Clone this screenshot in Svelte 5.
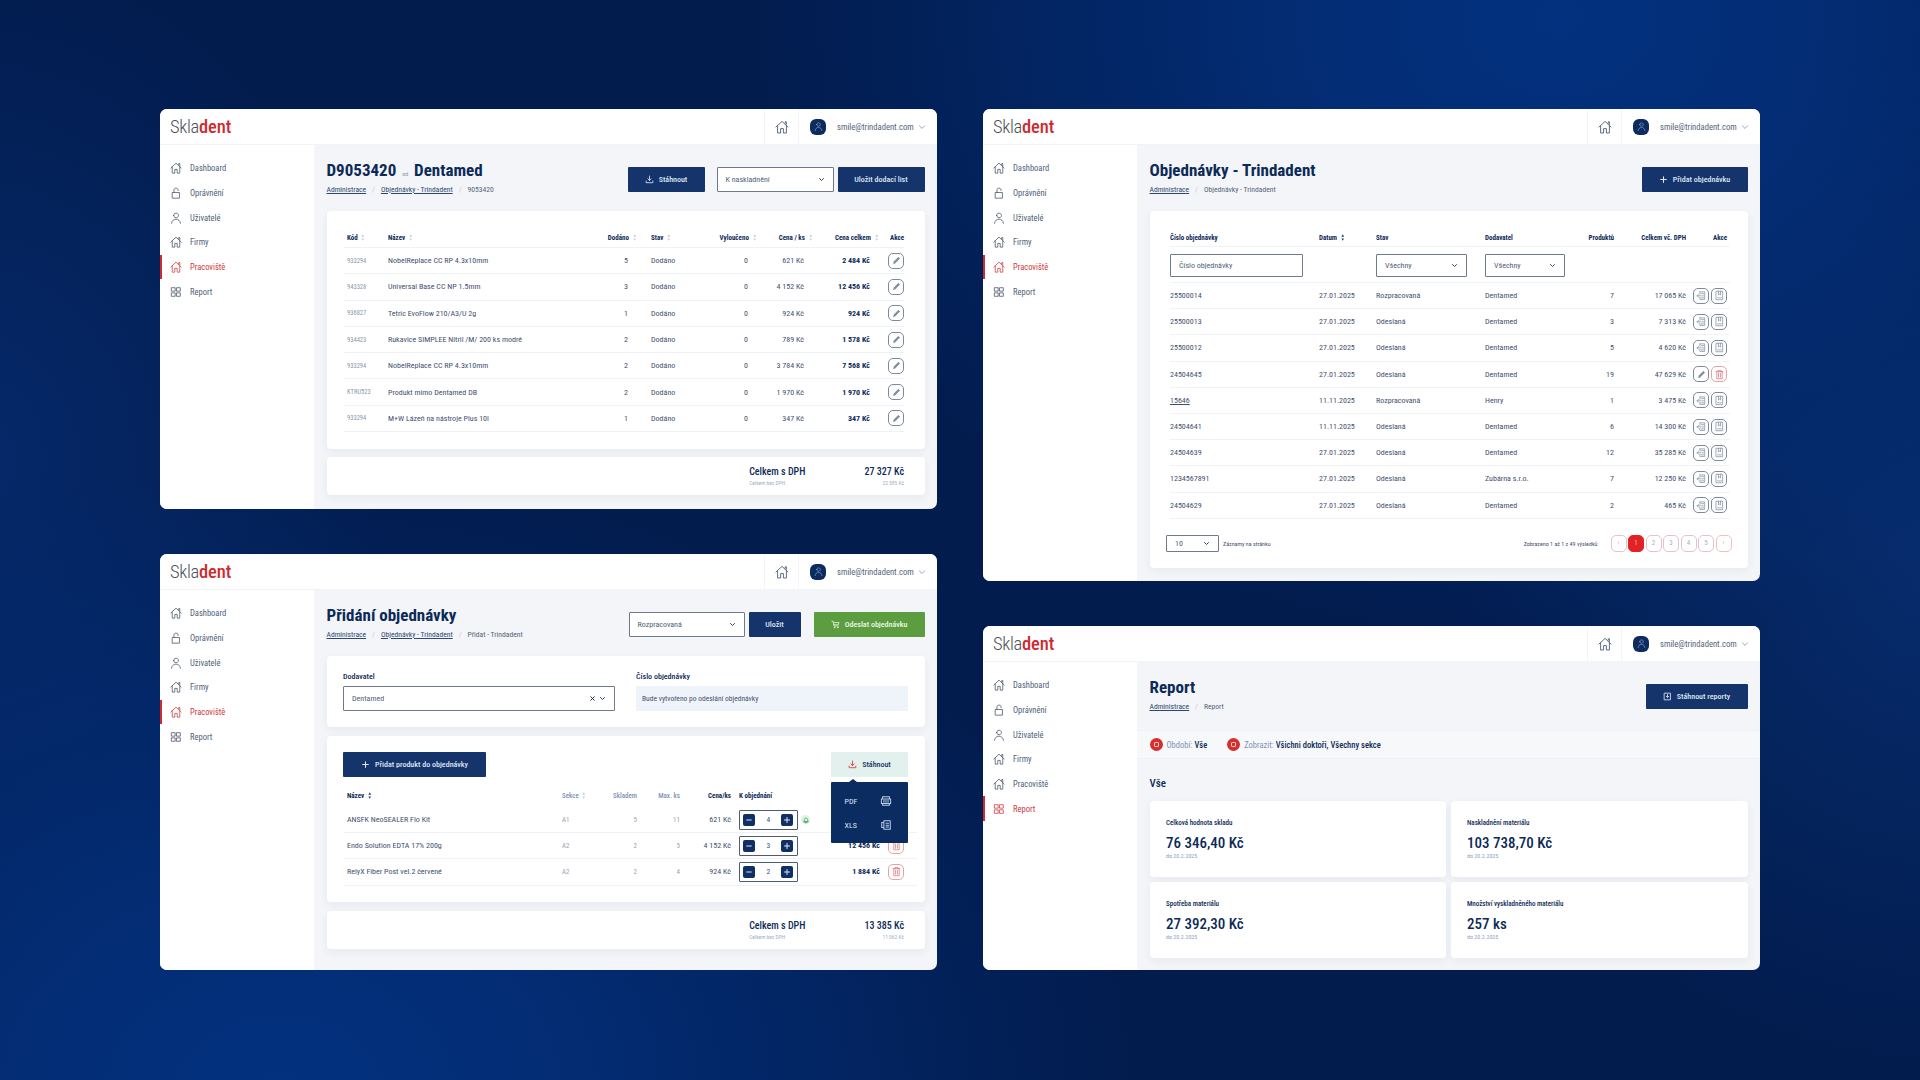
<script>
  const nav = [['home','Dashboard'],['lock','Oprávnění'],['user','Uživatelé'],['home','Firmy'],['home','Pracoviště'],['grid','Report']];
  const deliveries = [
    ['933294','NobelReplace CC RP 4.3x10mm','5','621 Kč','2 484 Kč'],
    ['943328','Universal Base CC NP 1.5mm','3','4 152 Kč','12 456 Kč'],
    ['936827','Tetric EvoFlow 210/A3/U 2g','1','924 Kč','924 Kč'],
    ['934423','Rukavice SIMPLEE Nitril /M/ 200 ks modré','2','789 Kč','1 578 Kč'],
    ['933294','NobelReplace CC RP 4.3x10mm','2','3 784 Kč','7 568 Kč'],
    ['KTRU523','Produkt mimo Dentamed DB','2','1 970 Kč','1 970 Kč'],
    ['933294','M+W Lázeň na nástroje Plus 10l','1','347 Kč','347 Kč']
  ];
  const orders = [
    ['25500014','27.01.2025','Rozpracovaná','Dentamed','7','17 065 Kč'],
    ['25500013','27.01.2025','Odeslaná','Dentamed','3','7 313 Kč'],
    ['25500012','27.01.2025','Odeslaná','Dentamed','5','4 620 Kč'],
    ['24504645','27.01.2025','Odeslaná','Dentamed','19','47 629 Kč'],
    ['15646','11.11.2025','Rozpracovaná','Henry','1','3 475 Kč'],
    ['24504641','11.11.2025','Odeslaná','Dentamed','6','14 300 Kč'],
    ['24504639','27.01.2025','Odeslaná','Dentamed','12','35 285 Kč'],
    ['1234567891','27.01.2025','Odeslaná','Zubárna s.r.o.','7','12 250 Kč'],
    ['24504629','27.01.2025','Odeslaná','Dentamed','2','465 Kč']
  ];
  const lines = [
    ['ANSFK NeoSEALER Flo Kit','A1','5','11','621 Kč','4','2 484 Kč'],
    ['Endo Solution EDTA 17% 200g','A2','2','5','4 152 Kč','3','12 456 Kč'],
    ['RelyX Fiber Post vel.2 červené','A2','2','4','924 Kč','2','1 884 Kč']
  ];
  const stats = [
    ['Celková hodnota skladu','76 346,40 Kč'],
    ['Naskladnění materiálu','103 738,70 Kč'],
    ['Spotřeba materiálu','27 392,30 Kč'],
    ['Množství vyskladněného materiálu','257 ks']
  ];
</script>

{#snippet icon(name)}
  <svg class="ic" viewBox="0 0 14 14" fill="none" stroke="currentColor" stroke-width="0.9" stroke-linejoin="round" stroke-linecap="round">
    {#if name === 'home'}
      <path d="M1 7 7 1.4 13 7M2.6 5.8V13H5.6V8.6H8.4V13H11.4V5.8M10.2 3.2V1.8H11.4V4.4"/>
    {:else if name === 'lock'}
      <path d="M3 6.4H11V13H3ZM4.6 6.4V3.4C4.6 .6 9.4 .6 9.4 3.4V4.2"/>
    {:else if name === 'user'}
      <path d="M4.2 4C4.2 .4 9.8 .4 9.8 4S4.2 7.6 4.2 4ZM1.8 13.2C2.2 6.6 11.8 6.6 12.2 13.2"/>
    {:else if name === 'grid'}
      <path d="M2 2H6V6H2ZM8 2H12V6H8ZM2 8H6V12H2ZM8 8H12V12H8Z"/>
    {:else if name === 'pencil'}
      <path d="M3.4 10.6 4 8.4 9.4 3 11 4.6 5.6 10Z" fill="currentColor"/>
    {:else if name === 'export'}
      <path d="M5 2.4H11V12H5V9.4M5 5.4V2.4M1.4 7.4H6.6M3.2 5.6 1.4 7.4 3.2 9.2M7 4.6H9.6M8 7.4H9.6M7 10H9.6"/>
    {:else if name === 'doc'}
      <path d="M3 1.6H11V12.4H3ZM5.6 1.6V6.4L7 5.2 8.4 6.4V1.6M4.6 10H9.4"/>
    {:else if name === 'trash'}
      <path d="M2.6 3.4H11.4M5 3.4V2H9V3.4M3.6 3.4V12.4H10.4V3.4M5.8 5.4V10.4M8.2 5.4V10.4"/>
    {:else if name === 'download'}
      <path d="M7 1.6V8.4M4.4 6 7 8.6 9.6 6M1.8 9.4V12H12.2V9.4" stroke-width="1.3"/>
    {:else if name === 'cart'}
      <path d="M1.4 2H3.4L4.8 9.4H11.4M3.8 4H12.4L11.4 7.4H4.4" stroke-width="1.2"/><circle cx="5.4" cy="11.6" r=".8"/><circle cx="10.6" cy="11.6" r=".8"/>
    {:else if name === 'plus'}
      <path d="M7 2.6V11.4M2.6 7H11.4" stroke-width="1.7"/>
    {:else if name === 'minus'}
      <path d="M3 7H11" stroke-width="1.7"/>
    {:else if name === 'chev'}
      <path d="M3 5 7 9 11 5" stroke-width="1.8"/>
    {:else if name === 'chevthin'}
      <path d="M2.5 5 7 9.5 11.5 5" stroke-width="1"/>
    {:else if name === 'x'}
      <path d="M3.5 3.5 10.5 10.5M10.5 3.5 3.5 10.5" stroke-width="2"/>
    {:else if name === 'save'}
      <path d="M2.4 1.8H11.6V12.2H2.4ZM7 3.8V8.4M5 6.6 7 8.6 9 6.6" stroke-width="1.3"/>
    {:else if name === 'sheet'}
      <path d="M2 4H4.5V2H12V12H4.5V10H2ZM4.5 4V10M7 5H10M7 7.2H10M7 9.4H10" stroke-width="1.2"/>
    {:else if name === 'pdf'}
      <path d="M3 4.6V2H11V4.6M3 10V12H11V10M1.6 4.6H12.4V10H1.6ZM4.6 6.2V8.4M7 6.2V8.4M9.4 6.2V8.4" stroke-width="1.2"/>
    {:else if name === 'bell'}
      <path d="M4 10V6.4C4 2.8 10 2.8 10 6.4V10ZM3 10H11M6 11.8H8" stroke-width="1.3"/>
    {/if}
  </svg>
{/snippet}

{#snippet sort(cls = '')}
  <svg class="sort {cls}" viewBox="0 0 4 8"><path d="M2 .4 3.6 3H.4Z"/><path d="M2 7.6 3.6 5H.4Z"/></svg>
{/snippet}

{#snippet crumbs(items)}
  <div class="crumbs">
    {#each items as c, i}
      {#if i > 0}<i>/</i>{/if}
      <span class:link={i < items.length - 1}>{c}</span>
    {/each}
  </div>
{/snippet}

{#snippet select(label, cls = '')}
  <div class="select {cls}"><span>{label}</span>{@render icon('chev')}</div>
{/snippet}

{#snippet totals(a, b)}
  <div class="card totals">
    <div><b>Celkem s DPH</b><small>Celkem bez DPH</small></div>
    <div class="tr"><b>{a}</b><small>{b}</small></div>
  </div>
{/snippet}

{#snippet win(cls, active, content)}
  <section class="win {cls}">
    <header class="top">
      <div class="logo"><span>Skla</span><b>dent</b></div>
      <div class="homecell">{@render icon('home')}</div>
      <div class="usercell">
        <span class="avatar">{@render icon('user')}</span>
        <span class="mail">smile@trindadent.com</span>
        {@render icon('chevthin')}
      </div>
    </header>
    <div class="under">
      <nav>
        {#each nav as [ic, label], i}
          <div class="navitem" class:on={i === active}>{@render icon(ic)}<span>{label}</span></div>
        {/each}
      </nav>
      <main>{@render content()}</main>
    </div>
  </section>
{/snippet}

{#snippet delivery()}
  <div class="head">
    <div>
      <h1>D9053420 <em>od</em> Dentamed</h1>
      {@render crumbs(['Administrace','Objednávky - Trindadent','9053420'])}
    </div>
    <div class="acts">
      <button class="btn w77">{@render icon('download')}Stáhnout</button>
      {@render select('K naskladnění','w117')}
      <button class="btn w87">Uložit dodací list</button>
    </div>
  </div>
  <div class="card t1">
    <div class="row hdr">
      <span>Kód {@render sort()}</span><span>Název {@render sort()}</span>
      <span class="r">Dodáno {@render sort()}</span><span class="st">Stav {@render sort()}</span>
      <span class="r">Vyloučeno {@render sort()}</span><span class="r">Cena / ks {@render sort()}</span>
      <span class="r">Cena celkem {@render sort()}</span><span class="r">Akce</span>
    </div>
    {#each deliveries as d}
      <div class="row">
        <span class="code">{d[0]}</span><span>{d[1]}</span>
        <span class="r v">{d[2]}</span><span class="st">Dodáno</span>
        <span class="r v">0</span><span class="r v">{d[3]}</span>
        <b class="r v">{d[4]}</b>
        <span class="r"><span class="ab">{@render icon('pencil')}</span></span>
      </div>
    {/each}
  </div>
  {@render totals('27 327 Kč','22 585 Kč')}
{/snippet}

{#snippet ordersView()}
  <div class="head">
    <div>
      <h1>Objednávky - Trindadent</h1>
      {@render crumbs(['Administrace','Objednávky - Trindadent'])}
    </div>
    <div class="acts"><button class="btn w106">{@render icon('plus')}Přidat objednávku</button></div>
  </div>
  <div class="card t2">
    <div class="row hdr">
      <span>Číslo objednávky</span><span>Datum {@render sort('dark')}</span><span>Stav</span><span>Dodavatel</span>
      <span class="r">Produktů</span><span class="r">Celkem vč. DPH</span><span class="r">Akce</span>
    </div>
    <div class="row filters">
      <div class="input w133">Číslo objednávky</div><span></span>
      {@render select('Všechny','w91')}
      {@render select('Všechny','w80')}
    </div>
    {#each orders as o, i}
      <div class="row">
        <span class:ul={i === 4}>{o[0]}</span><span>{o[1]}</span><span>{o[2]}</span><span>{o[3]}</span>
        <span class="r">{o[4]}</span><span class="r">{o[5]}</span>
        <span class="r pair">
          {#if i === 3}
            <span class="ab">{@render icon('pencil')}</span><span class="ab red">{@render icon('trash')}</span>
          {:else}
            <span class="ab">{@render icon('export')}</span><span class="ab">{@render icon('doc')}</span>
          {/if}
        </span>
      </div>
    {/each}
    <div class="pager">
      {@render select('10','w53')}
      <small>Záznamy na stránku</small>
      <small class="found">Zobrazeno 1 až 1 z 49 výsledků</small>
      <div class="pages">
        <span>‹</span><span class="cur">1</span><span>2</span><span>3</span><span>4</span><span>5</span><span>›</span>
      </div>
    </div>
  </div>
{/snippet}

{#snippet newOrder()}
  <div class="head">
    <div>
      <h1>Přidání objednávky</h1>
      {@render crumbs(['Administrace','Objednávky - Trindadent','Přidat - Trindadent'])}
    </div>
    <div class="acts">
      {@render select('Rozpracovaná','w116')}
      <button class="btn w52">Uložit</button>
      <button class="btn green">{@render icon('cart')}Odeslat objednávku</button>
    </div>
  </div>
  <div class="card form">
    <label>Dodavatel
      <div class="select big"><span>Dentamed</span><span class="xc">{@render icon('x')}{@render icon('chev')}</span></div>
    </label>
    <label>Číslo objednávky
      <div class="readonly">Bude vytvořeno po odeslání objednávky</div>
    </label>
  </div>
  <div class="card t3">
    <div class="tools">
      <button class="btn w143">{@render icon('plus')}Přidat produkt do objednávky</button>
      <button class="btn pale">{@render icon('download')}Stáhnout</button>
    </div>
    <div class="row hdr">
      <span>Název {@render sort('dark')}</span><span class="mut">Sekce {@render sort()}</span>
      <span class="r mut">Skladem</span><span class="r mut">Max. ks</span>
      <span class="r">Cena/ks</span><span class="sl">K objednání</span><span></span><span></span>
    </div>
    {#each lines as l, i}
      <div class="row">
        <span>{l[0]}</span><span class="pale-t">{l[1]}</span>
        <span class="r pale-t">{l[2]}</span><span class="r pale-t">{l[3]}</span>
        <span class="r">{l[4]}</span>
        <span class="sl stepcell">
          <span class="stepper"><span class="sb">{@render icon('minus')}</span><span>{l[5]}</span><span class="sb">{@render icon('plus')}</span></span>
          {#if i === 0}<span class="bell">{@render icon('bell')}</span>{/if}
        </span>
        <b class="r">{l[6]}</b>
        <span class="r"><span class="ab red">{@render icon('trash')}</span></span>
      </div>
    {/each}
    <div class="drop">
      <div><span>PDF</span>{@render icon('pdf')}</div>
      <div><span>XLS</span>{@render icon('sheet')}</div>
    </div>
  </div>
  {@render totals('13 385 Kč','11 062 Kč')}
{/snippet}

{#snippet report()}
  <div class="head">
    <div>
      <h1>Report</h1>
      {@render crumbs(['Administrace','Report'])}
    </div>
    <div class="acts"><button class="btn w102">{@render icon('save')}Stáhnout reporty</button></div>
  </div>
  <div class="band">
    <span class="fl"><i class="dot"></i><em>Období:</em> <b>Vše</b></span>
    <span class="fl"><i class="dot"></i><em>Zobrazit:</em> <b>Všichni doktoři, Všechny sekce</b></span>
  </div>
  <h2>Vše</h2>
  <div class="stats">
    {#each stats as s}
      <div class="card stat"><h3>{s[0]}</h3><strong>{s[1]}</strong><small>do 20.2.2025</small></div>
    {/each}
  </div>
{/snippet}

<div class="page">
  <div class="col">
    {@render win('h400', 4, delivery)}
    {@render win('h416', 4, newOrder)}
  </div>
  <div class="col">
    {@render win('h472', 4, ordersView)}
    {@render win('h344', 5, report)}
  </div>
</div>

<style>
  :global(body){margin:0;font-family:Roboto,"Liberation Sans",sans-serif;}
  .page{width:1920px;height:1080px;box-sizing:border-box;padding:109px 0 0 160px;display:flex;gap:46px;overflow:hidden;
    background:radial-gradient(ellipse 800px 620px at 1560px 20px,#03317f 0%,rgba(3,49,127,.75) 35%,rgba(3,49,127,0) 100%),
      radial-gradient(ellipse 850px 620px at 280px 1090px,#03317f 0%,rgba(3,49,127,.75) 35%,rgba(3,49,127,0) 100%),
      radial-gradient(ellipse 500px 500px at 1950px 560px,#072c6d 0%,rgba(7,44,109,0) 100%),
      radial-gradient(ellipse 420px 500px at -30px 460px,#06296a 0%,rgba(6,41,106,0) 100%),
      #021c4e;color:#0d2a57;font-stretch:80%;}
  .col{width:777px;display:flex;flex-direction:column;gap:45px;}
  .win{background:#f3f5f8;border-radius:7px;overflow:hidden;display:flex;flex-direction:column;}
  .h400{height:400px}.h416{height:416px}.h472{height:472px}.h344{height:344px}
  .ic{width:14px;height:14px;flex:none;}
  .top{height:36px;background:#fff;display:flex;align-items:stretch;flex:none;border-bottom:1px solid #f1f3f6;box-sizing:border-box;}
  .logo{flex:1;padding-left:10px;font-size:18.5px;line-height:37px;color:#4a5058;font-weight:300;letter-spacing:-.3px;}
  .logo b{color:#cf2a30;font-weight:500;letter-spacing:-.1px;}
  .homecell{width:33px;border:solid #f3f5f7;border-width:0 1px;display:flex;align-items:center;justify-content:center;color:#4d5f7a;}
  .usercell{width:138px;display:flex;align-items:center;padding-left:11px;box-sizing:border-box;color:#55647a;}
  .avatar{width:16px;height:16px;border-radius:6px;background:#0c2c60;color:#9fb7dd;display:flex;align-items:center;justify-content:center;}
  .avatar .ic{width:9px;height:9px;}
  .mail{font-size:8.6px;margin-left:11px;width:81px;white-space:nowrap;}
  .usercell>.ic{width:8px;height:8px;}
  .under{flex:1;display:flex;min-height:0;}
  nav{width:154px;background:#fff;padding-top:11px;flex:none;box-sizing:border-box;}
  .navitem{height:24.7px;display:flex;align-items:center;padding-left:10px;font-size:8.5px;color:#4f5f78;position:relative;}
  .navitem .ic{width:12px;height:14px;margin-right:8px;color:#475367;}
  .navitem.on,.navitem.on .ic{color:#cf3a40;}
  .navitem.on::before{content:"";position:absolute;left:0;top:0;bottom:0;width:2px;background:#cf2a30;}
  main{flex:1;padding:0 12.5px;min-width:0;}
  .head{height:66px;display:flex;justify-content:space-between;padding-top:15px;box-sizing:border-box;}
  h1{margin:0;font-size:17px;line-height:20px;font-weight:700;color:#0c2a57;white-space:nowrap;}
  h1 em{font-size:6px;line-height:1;font-style:normal;font-weight:400;color:#8a97aa;margin:0 2px;}
  .crumbs{font-size:7.6px;line-height:10px;margin-top:5px;color:#55647a;display:flex;gap:6px;}
  .crumbs i{color:#c3cad5;font-style:normal;}
  .crumbs .link{text-decoration:underline;color:#2c4770;}
  .acts{display:flex;gap:4px;margin-top:7px;align-items:flex-start;}
  .btn{height:25px;border:0;border-radius:1px;background:#15346b;color:#dfe7f4;font:inherit;font-size:8px;font-weight:500;display:flex;align-items:center;justify-content:center;gap:5px;padding:0;}
  .btn .ic{width:9px;height:9px;}
  .w77{width:77px;margin-right:8px}.w87{width:87px}.w106{width:106px}.w52{width:52px;margin-right:9px}.w143{width:143px}.w102{width:102px}
  .green{width:111px;background:#5c9e3f;color:#eef6ea;}
  .select,.input{height:25px;box-sizing:border-box;background:#fff;border:1px solid #6e7a8c;border-radius:1px;font-size:8px;color:#4f5f78;display:flex;align-items:center;justify-content:space-between;padding:0 8px;}
  .select .ic{width:7px;height:7px;color:#1d3358;}
  .w117{width:117px}.w116{width:116px}
  .card{background:#fff;border-radius:4px;box-shadow:0 3px 8px rgba(30,50,90,.06);}
  .row{display:grid;align-items:center;font-size:8px;color:#3f5070;border-bottom:1px solid #f0f2f5;white-space:nowrap;box-sizing:border-box;}
  .hdr{font-size:7px;font-weight:700;color:#0d2a57;}
  .r{text-align:right;}
  b{font-weight:700;color:#0d2a57;}
  .sort{width:3.5px;height:7px;margin-left:2px;fill:#c4ccd8;vertical-align:-1px;}
  .sort.dark{fill:#24406e;}
  .ab{display:inline-flex;width:16px;height:16px;box-sizing:border-box;border:1px solid #7d8a9c;border-radius:5px;align-items:center;justify-content:center;color:#7d8a9c;vertical-align:middle;}
  .ab .ic{width:11px;height:11px;}
  .ab.red{border-color:#e6a2a6;color:#d96a70;background:#fff;}
  .t1{height:238px;padding:17px 20.5px 0 17.5px;box-sizing:border-box;margin-bottom:8px;}
  .t1 .row{grid-template-columns:41px 212px 36px 64px 56px 56px 66px 26px;height:26.3px;padding-left:3px;}
  .t1 .hdr{height:20px;}
  .t1 .v{padding-right:8px;}
  .t1 .st{padding-left:15px;}
  .code{font-size:6.5px;color:#8b98ab;}
  .totals{height:38px;display:flex;justify-content:flex-end;gap:59px;padding:9px 20.5px 0 0;box-sizing:border-box;}
  .totals b{display:block;font-size:10px;line-height:11px;font-weight:500;}
  .totals small{display:block;font-size:5.5px;line-height:8px;margin-top:2px;color:#9fb0c6;}
  .tr{text-align:right;}
  .t2{height:357px;padding:18px 18px 0 20.5px;box-sizing:border-box;}
  .t2 .row{grid-template-columns:149px 57px 109px 90px 39px 72px 41px;height:26.2px;}
  .t2 .hdr{height:18px;font-size:7px;}
  .t2 .filters{height:36px;padding-top:1px;}
  .t2 .filters .input,.t2 .filters .select{height:23px;}
  .w133{width:133px}.w91{width:91px}.w80{width:80px}.w53{width:53px}
  .pair{display:flex;justify-content:flex-end;gap:2px;}
  .ul{text-decoration:underline;}
  .pager{display:flex;align-items:center;margin:16px 0 0 -4px;}
  .pager .select{height:17px;margin-right:4px;}
  .pager small{font-size:6px;color:#3f5070;}
  .found{margin-left:auto;margin-right:13px;}
  .pages{display:flex;gap:1.5px;margin-right:-2px;}
  .pages span{width:16px;height:17px;box-sizing:border-box;border:1px solid #e8c3c5;border-radius:5px;display:flex;align-items:center;justify-content:center;font-size:7px;color:#a7b1bf;}
  .pages .cur{background:#e32226;border-color:#e32226;color:#f5b9bb;}
  .form{height:71px;display:flex;gap:21px;padding:16px 16.5px 0;box-sizing:border-box;margin-bottom:9px;}
  .form label{width:272px;font-size:8px;line-height:10px;color:#0d2a57;font-weight:500;display:block;}
  .select.big{height:25px;margin-top:4px;font-weight:400;}
  .xc{display:flex;gap:3px;}
  .readonly{height:25px;margin-top:4px;background:#eff4fb;font-size:7.5px;font-weight:400;line-height:25px;padding-left:6px;color:#3f5070;}
  .t3{height:166px;padding:16px 8px 0 17.5px;box-sizing:border-box;position:relative;margin-bottom:9px;}
  .tools{display:flex;justify-content:space-between;margin-right:8.5px;height:30px;margin-left:-1px;}
  .pale{width:77px;background:#e3f1ee;color:#16325f;}
  .pale .ic{color:#d5353a;}
  .t3 .row{grid-template-columns:215px 40px 35px 43px 51px 66.5px 82.5px 24px;height:26.2px;padding:0 6px 0 3px;}
  .t3 .hdr{height:25px;border-bottom:0;padding-top:3px;}
  .mut{color:#7e93b4;font-weight:500;}
  .pale-t{color:#98a3b3;font-size:7px;}
  .sl{padding-left:8px;}
  .stepcell{display:flex;align-items:center;position:relative;}
  .stepper{width:58.5px;height:20px;box-sizing:border-box;border:1px solid #4f5d72;border-radius:1px;display:flex;align-items:center;justify-content:space-between;padding:0 3px;font-size:7.5px;}
  .sb{width:12px;height:12px;background:#0f2f66;color:#e6edf8;border-radius:2px;display:flex;align-items:center;justify-content:center;}
  .sb .ic{width:8px;height:8px;}
  .bell{position:absolute;left:70px;width:9px;height:9px;border-radius:50%;background:#dff3e6;color:#3f9a5d;display:flex;align-items:center;justify-content:center;}
  .bell .ic{width:8px;height:8px;}
  .drop{position:absolute;left:504px;top:46px;width:77px;height:61px;background:#0b2c60;border-radius:1px;color:#dce6f5;font-size:8px;box-sizing:border-box;padding:7px 0 0;}
  .drop::before{content:"";position:absolute;left:18px;top:-3px;border:solid transparent;border-width:0 4px 3px;border-bottom-color:#0b2c60;}
  .drop div{height:24px;display:flex;align-items:center;justify-content:space-between;padding:0 16px 0 14px;}
  .drop .ic{width:12px;height:12px;color:#b8cbe8;}
  .band{height:29px;margin:2px -12.5px 0;padding:0 12.5px;background:#f7f8fa;display:flex;gap:20px;align-items:center;font-size:8.5px;border:solid #eff1f4;border-width:1px 0;box-sizing:border-box;}
  .fl{display:flex;align-items:center;gap:4px;}
  .fl em{font-style:normal;color:#7e93b4;}
  .fl b{font-weight:500;margin-left:-2px;}
  .dot{width:13px;height:13px;border-radius:50%;background:#d5302f;display:block;position:relative;}
  .dot::after{content:"";position:absolute;left:4px;top:4px;width:5px;height:5px;border:1px solid #f7c4c4;box-sizing:border-box;border-radius:1px;}
  h2{margin:0;height:42px;line-height:50px;font-size:11px;font-weight:500;color:#0d2a57;}
  .stats{display:grid;grid-template-columns:296px 297px;gap:5px;}
  .stat{height:76px;box-sizing:border-box;padding:17px 0 0 16.5px;}
  h3{margin:0;font-size:7px;line-height:10px;font-weight:500;color:#0d2a57;}
  .stat strong{display:block;font-size:15px;line-height:16px;margin-top:7px;font-weight:500;color:#0d2a57;}
  .stat small{display:block;font-size:6px;line-height:8px;margin-top:1px;color:#8fa2bd;}
</style>
